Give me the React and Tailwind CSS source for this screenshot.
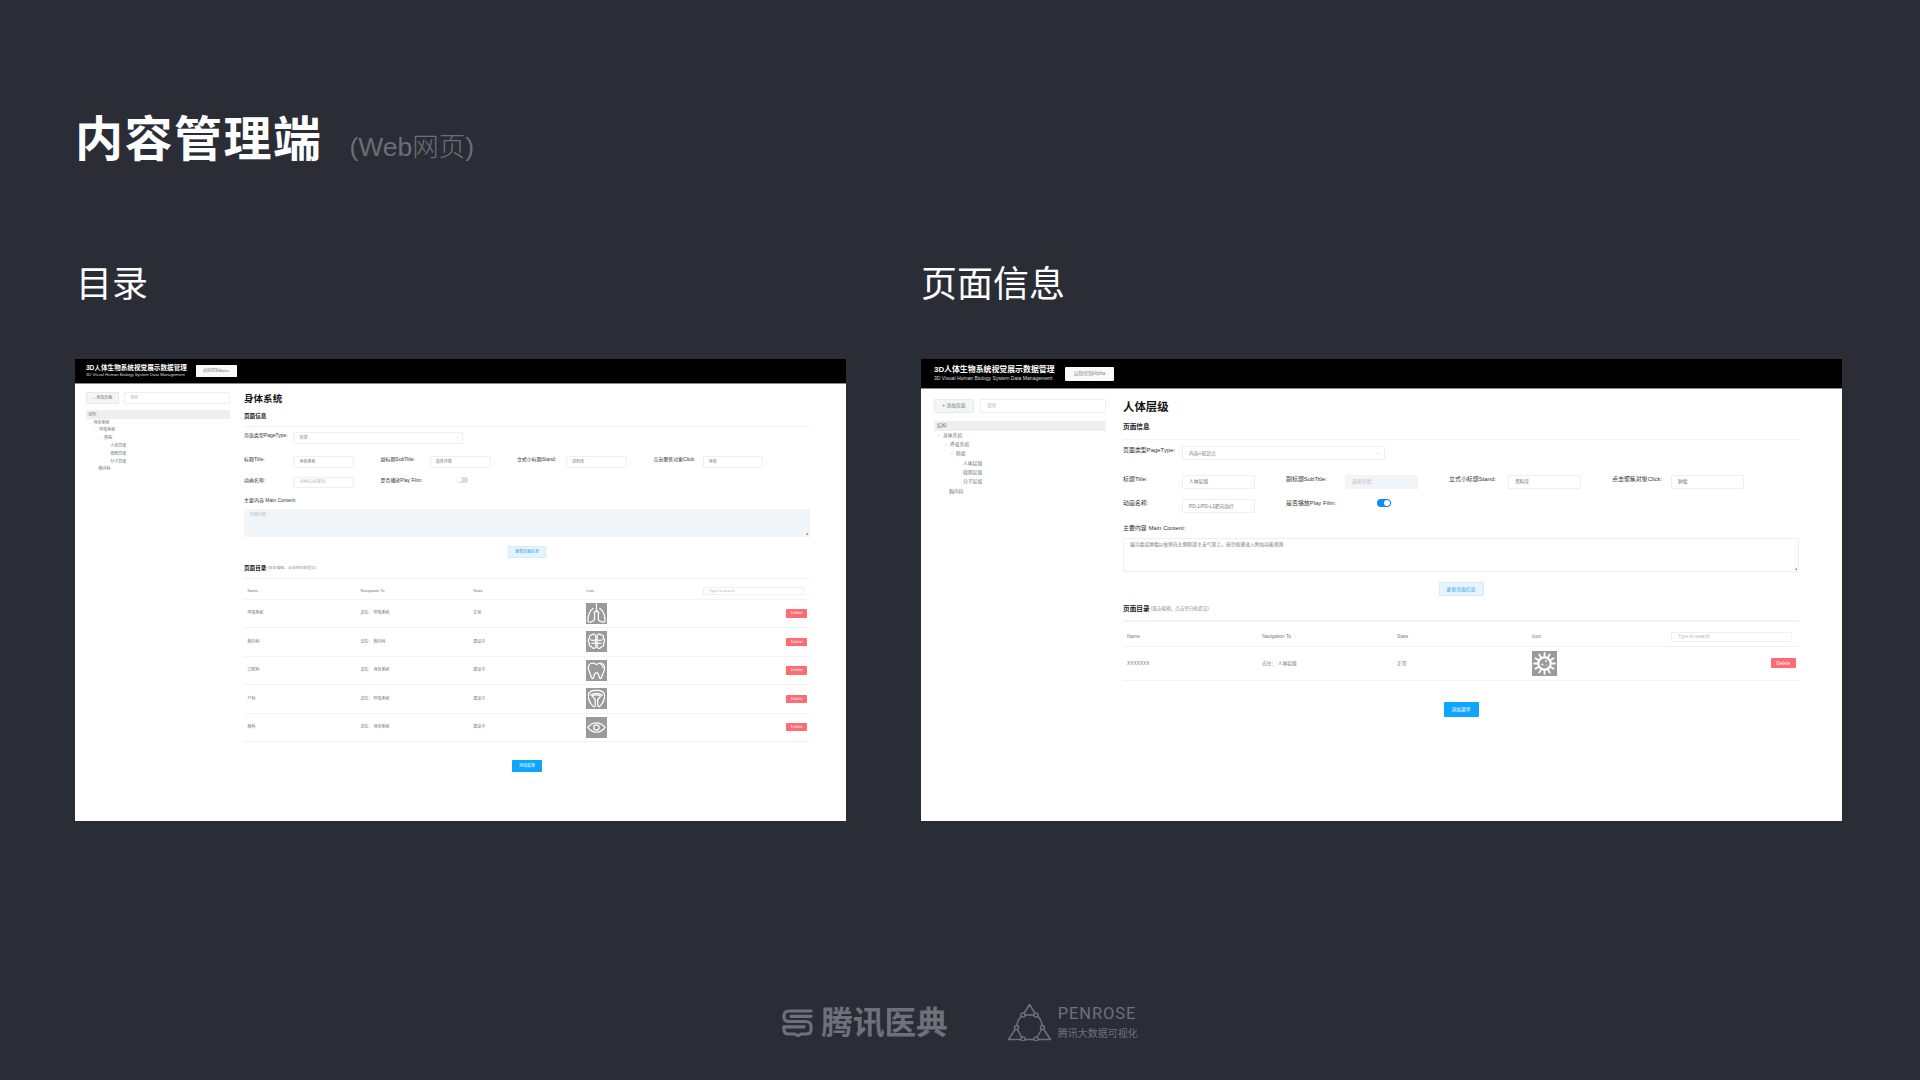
import { ChevronDown } from "lucide-react";

const font = "font-['Liberation_Sans','Noto_Sans_CJK_SC',sans-serif]";

const spikes = [0, 30, 60, 90, 120, 150, 180, 210, 240, 270, 300, 330];

function IconBox({ children }) {
  return (
    <svg viewBox="0 0 25 25" className="h-[25px] w-[25px] bg-[#9a9a9a]" fill="none" stroke="#fff" strokeWidth="1.500" strokeLinecap="round" strokeLinejoin="round">
      {children}
    </svg>
  );
}

function LungsIcon() {
  return (
    <IconBox>
      <path d="M12.500 1v3M12.500 5.500v5M12.500 8.500 9.500 11.500M12.500 8.500l3 3" />
      <path d="M8.500 6.500C5 8.500 2.600 14 2.200 20.500c-.1 2 1 2.600 2.600 2.300 3-.5 5.400-1 5.400-3.600V11.500" />
      <path d="M16.500 6.500c3.500 2 5.900 7.500 6.300 14 .1 2-1 2.600-2.600 2.300-3-.5-5.400-1-5.400-3.600V11.500" />
    </IconBox>
  );
}

function BrainIcon() {
  return (
    <IconBox>
      <path d="M11.700 5.500C11 3.500 8.500 3 7 4.500 4.800 4.500 3.700 6.300 4.300 8.300 2.300 9.800 2.300 13 4 14.500 3.300 17 5 19 7 19c.8 2 3.700 2.300 4.700.2Z" />
      <path d="M13.300 5.500C14 3.500 16.500 3 18 4.500c2.200 0 3.300 1.800 2.700 3.800 2 1.500 2 4.700.3 6.200.7 2.500-1 4.500-3 4.500-.8 2-3.700 2.300-4.700.2Z" />
      <path d="M5.500 10.500c2 1.200 4 1 6.200 0M7 15c1.500-.8 3-.8 4.700 0M19.500 10.500c-2 1.200-4 1-6.200 0M18 15c-1.500-.8-3-.8-4.700 0" />
    </IconBox>
  );
}

function ToothIcon() {
  return (
    <IconBox>
      <path d="M12.500 5.500C9 2.500 2.800 2.800 2.800 9.500c0 4 2.200 6 3.200 10 .6 2.800 2.300 3.400 3 1.500.8-2.400 1-6 3.500-6s2.700 3.600 3.500 6c.7 1.900 2.400 1.300 3-1.500 1-4 3.200-6 3.200-10 0-6.700-6.200-7-9.700-4Z" />
      <path d="M17.500 4.800c1.700.6 2.800 2.200 2.800 4.400" />
    </IconBox>
  );
}

function UterusIcon() {
  return (
    <IconBox>
      <path d="M12.500 2.800C6.500 2.800 2.800 4.800 2.800 9c0 5 3.200 10.500 5.800 12.800 1.200 1 2.400.2 2.400-1.300v-6.800L7.200 9.500c3.500-1.800 7-1.800 10.600 0L14 13.700v6.800c0 1.500 1.200 2.300 2.400 1.300 2.600-2.300 5.800-7.800 5.800-12.800 0-4.200-3.700-6.200-9.700-6.200Z" />
      <path d="M5.500 8.500c4.500-2.800 9.500-2.800 14 0" />
    </IconBox>
  );
}

function EyeIcon() {
  return (
    <IconBox>
      <path d="M2.200 12.500C7.500 5 17.500 5 22.800 12.500 17.500 20 7.500 20 2.200 12.500Z" />
      <circle cx="12.500" cy="12.500" r="3.200" />
    </IconBox>
  );
}

function VirusIcon() {
  return (
    <IconBox>
      <circle cx="12.500" cy="12.500" r="6.200" strokeWidth="2.200" />
      {spikes.map((a) => (
        <line
          key={a}
          x1={12.5 + 6.5 * Math.cos((a * Math.PI) / 180)}
          y1={12.5 + 6.5 * Math.sin((a * Math.PI) / 180)}
          x2={12.5 + 10.5 * Math.cos((a * Math.PI) / 180)}
          y2={12.5 + 10.5 * Math.sin((a * Math.PI) / 180)}
          strokeWidth="1.800"
        />
      ))}
      <circle cx="10.500" cy="13.500" r="1" fill="#fff" stroke="none" />
      <circle cx="14" cy="10" r="0.900" fill="#fff" stroke="none" />
      <circle cx="14.500" cy="14.500" r="0.600" fill="#fff" stroke="none" />
    </IconBox>
  );
}

function TencentLogo() {
  return (
    <svg viewBox="0 0 31 29" className="h-[29px] w-[31px]" fill="none" stroke="#6d717b" strokeWidth="3.200" strokeLinecap="round" strokeLinejoin="round">
      <path d="M29 3H7.500C4 3 2 5 2 7.500v1.200C2 11.500 4 13.500 7.500 13.500h16c3.500 0 5.500 2 5.500 4.500V22c0 2.500-2 4-5 4h-5l-3 1.800-3-1.800H7c-3 0-5-1.500-5-4v-3" />
      <path d="M9 8.300h20M2 18.800h20" />
    </svg>
  );
}

function PenroseLogo() {
  const nodes = [[15.5, 12], [28.5, 12], [9, 24.5], [35, 24.5], [15.5, 36], [28.5, 36]];
  return (
    <svg viewBox="0 0 44 38" className="h-[38px] w-[45px]" fill="none" stroke="#6d717b" strokeWidth="1.500" strokeLinejoin="round">
      <path d="M22 1.500 15.500 12h13ZM9 24.500 1 36.500h14.500ZM35 24.500 43 36.500H28.500Z" />
      <path d="M15.500 12C11.500 14.500 9.500 19 9 24.500M28.500 12c4 2.500 6 7 6.500 12.500M15.500 36.500h13" />
      {nodes.map(([x, y]) => (
        <circle key={`${x}-${y}`} cx={x} cy={y} r="2" fill="#2a2d36" />
      ))}
    </svg>
  );
}

function Field({ label, value, muted, disabled }) {
  return (
    <div className="flex items-start">
      <div className="w-[59px] text-[5.950px] leading-[8px] text-[#333]">{label}</div>
      <div className={`flex h-[14px] w-[72.500px] items-center rounded-[1px] border px-[6px] text-[4.800px] ${disabled ? "border-[#f2f5f8] bg-[#f2f5f8]" : "border-[#f0f0f0] bg-white"} ${muted ? "text-[#bbb]" : "text-[#777]"}`}>
        {value}
      </div>
    </div>
  );
}

function Toggle({ on }) {
  return (
    <div className="flex items-start">
      <div className="w-[91px] text-[5.950px] leading-[8px] text-[#333]">是否播放Play Film:</div>
      <div className={`flex h-[8px] w-[14px] items-center rounded-full px-[1px] ${on ? "justify-end bg-[#0a8cf5]" : "justify-start bg-[#dcdcdc]"}`}>
        <div className="h-[6px] w-[6px] rounded-full bg-white" />
      </div>
    </div>
  );
}

function Panel({ frame, inner, data }) {
  return (
    <div className={`overflow-hidden bg-white ${frame}`}>
      <div className={`w-[921px] ${inner}`}>
        <div className="flex h-[30px] items-center border-b border-[#8a8a8a] bg-black pl-[13px]">
          <div className="w-[131px]">
            <div className="text-[7.900px] leading-[10px] font-bold text-white">3D人体生物系统视觉展示数据管理</div>
            <div className="text-[5.050px] leading-[7px] text-[#ddd]">3D Visual Human Biology System Data Management</div>
          </div>
          <div className="flex h-[14px] w-[49px] items-center justify-center rounded-[1px] bg-[#fafafa] text-[4.800px] text-[#888]">远程控制Alpha</div>
        </div>

        <div className="flex pt-[10px]">
          <div className="ml-[13px] w-[172px] text-[4.800px] text-[#777]">
            <div className="flex gap-[6px]">
              <div className="flex h-[14px] w-[40px] items-center justify-center rounded-[1px] border border-[#eaeaea] bg-[#f4f5f7]">+ 添加页面</div>
              <div className="flex h-[14px] flex-1 items-center rounded-[1px] border border-[#f0f0f0] px-[6px] text-[#bbb]">搜索</div>
            </div>
            <div className="mt-[7.500px] flex h-[10px] items-center bg-[#efefef] pl-[3px]">结构</div>
            <div className="flex h-[9.330px] items-center pl-[4px]"><span className="w-[5px]">-</span>身体系统</div>
            <div className="flex h-[9.330px] items-center pl-[11px]"><span className="w-[5px]">-</span>呼吸系统</div>
            <div className="flex h-[9.330px] items-center pl-[17px]"><span className="w-[5px]">-</span>肺癌</div>
            <div className="flex h-[9.330px] items-center pl-[29px]">人体层级</div>
            <div className="flex h-[9.330px] items-center pl-[29px]">微观层级</div>
            <div className="flex h-[9.330px] items-center pl-[29px]">分子层级</div>
            <div className="flex h-[9.330px] items-center pl-[15px]">胸内科</div>
          </div>

          <div className="ml-[17px] w-[676px]">
            <div className="text-[11.400px] leading-[16px] font-bold text-[#111]">{data.title}</div>
            <div className="mt-[7.300px] text-[6.670px] leading-[10px] font-bold text-[#222]">页面信息</div>
            <div className="mt-[6.500px] h-[1.500px] bg-[#f3f3f3]" />

            <div className="mt-[6.200px] flex items-start">
              <div className="w-[59px] text-[5.950px] leading-[8px] text-[#333]">页面类型PageType:</div>
              <div className="flex h-[14px] w-[203px] items-center justify-between rounded-[1px] border border-[#f0f0f0] pr-[4px] pl-[6px] text-[4.800px] text-[#777]">
                {data.pageType}
                <ChevronDown className="h-[5px] w-[5px] text-[#bbb]" strokeWidth={1.500} />
              </div>
            </div>

            <div className="mt-[14.600px] grid grid-cols-[repeat(4,163px)]">
              <Field label="标题Title:" value={data.name} />
              <Field label="副标题SubTitle:" value="选择详情" muted={data.subDisabled} disabled={data.subDisabled} />
              <Field label="立式小标题Stand:" value="资料库" />
              <Field label="点击聚焦对象Click:" value={data.click} />
            </div>

            <div className="mt-[10.400px] grid grid-cols-[repeat(4,163px)]">
              <Field label="动画名称:" value={data.film} muted={data.filmMuted} />
              <Toggle on={data.playing} />
            </div>

            <div className="mt-[10.600px] text-[5.950px] leading-[8px] text-[#333]">主要内容 Main Content:</div>
            <div className={`relative mt-[6px] h-[34px] rounded-[1px] border px-[6px] py-[3px] text-[4.800px] leading-[6px] ${data.contentClass}`}>
              {data.content}
              <div className="absolute right-[1px] bottom-[1px] h-[3px] w-[3px] bg-[linear-gradient(135deg,transparent_50%,#999_50%)]" />
            </div>

            <div className="mt-[10px] flex justify-center">
              <div className="flex h-[14.400px] w-[45px] items-center justify-center rounded-[1px] border border-[#d3eafb] bg-[#e8f4fd] text-[4.800px] text-[#1aa1f5]">更新页面信息</div>
            </div>

            <div className="mt-[7.700px] flex items-center leading-[10px]">
              <span className="text-[6.670px] font-bold text-[#222]">页面目录</span>
              <span className="ml-[1px] text-[4.600px] text-[#888]">(双击编辑，点击空白处提交)</span>
            </div>
            <div className="mt-[6.300px] h-[1.500px] bg-[#f3f3f3]" />

            <div className="grid h-[24.800px] grid-cols-[135px_135px_135px_135px_1fr] items-center border-b border-[#f3f3f3] pt-[6px] pl-[4px] text-[4.800px] text-[#777]">
              <div>Name</div>
              <div>Navigation To</div>
              <div>State</div>
              <div>Icon</div>
              <div className="flex justify-end pr-[7px]">
                <div className="flex h-[9.500px] w-[121px] items-center rounded-[1px] border border-[#f0f0f0] px-[6px] text-[#bbb]">Type to search</div>
              </div>
            </div>

            {data.rows.map((row) => (
              <div key={row.name} className="grid h-[34px] grid-cols-[135px_135px_135px_135px_1fr] items-center border-b border-[#f3f3f3] pl-[4px] text-[4.800px] text-[#777]">
                <div>{row.name}</div>
                <div>{row.nav}</div>
                <div>{row.state}</div>
                <div>{row.icon}</div>
                <div className="flex justify-end pr-[3.400px]">
                  <div className="flex h-[10px] w-[24.600px] items-center justify-center rounded-[1px] bg-[#ff6b72] text-white">Delete</div>
                </div>
              </div>
            ))}

            <div className="mt-[21.500px] flex justify-center">
              <div className="flex h-[14.700px] w-[35px] items-center justify-center rounded-[1px] bg-[#0ea5ff] text-[4.800px] text-white">添加菜单</div>
            </div>
          </div>
        </div>
      </div>
    </div>
  );
}

const catalog = {
  title: "身体系统",
  pageType: "目录",
  name: "身体系统",
  click: "身体",
  film: "动画名(前播放)",
  filmMuted: true,
  subDisabled: false,
  playing: false,
  content: "页面内容",
  contentClass: "border-[#f2f5f8] bg-[#f2f5f8] text-[#bbb]",
  rows: [
    { name: "呼吸系统", nav: "去往： 呼吸系统", state: "正常", icon: <LungsIcon /> },
    { name: "胸内科", nav: "去往： 胸内科", state: "建设中", icon: <BrainIcon /> },
    { name: "口腔科", nav: "去往： 身体系统", state: "建设中", icon: <ToothIcon /> },
    { name: "产科", nav: "去往： 呼吸系统", state: "建设中", icon: <UterusIcon /> },
    { name: "眼科", nav: "去往： 身体系统", state: "建设中", icon: <EyeIcon /> },
  ],
};

const pageInfo = {
  title: "人体层级",
  pageType: "内容+知识点",
  name: "人体层级",
  click: "肿瘤",
  film: "PD-1/PD-L1靶向治疗",
  filmMuted: false,
  subDisabled: true,
  playing: true,
  content: "展示癌症肿瘤以依附在左侧肺部主支气管上。按空格键进入附加功能视角",
  contentClass: "border-[#f0f0f0] bg-white text-[#777]",
  rows: [{ name: "XXXXXXX", nav: "去往： 人体层级", state: "正常", icon: <VirusIcon /> }],
};

export default function App() {
  return (
    <div className={`h-[1080px] w-[1920px] overflow-hidden bg-[#2a2d36] pt-[110px] ${font}`}>
      <div className="flex items-baseline pl-[75px]">
        <h1 className="text-[48px] leading-[60px] font-bold tracking-[1.500px] text-white">内容管理端</h1>
        <span className="ml-[27px] text-[26.500px] font-light text-[#6b6e76]">(Web网页)</span>
      </div>

      <div className="mt-[93px] flex text-[36px] leading-[44px] text-white">
        <div className="w-[921px] pl-[76px]">目录</div>
        <div>页面信息</div>
      </div>

      <div className="mt-[52px] flex gap-[75px] pl-[75px]">
        <Panel frame="h-[462px] w-[771px]" inner="h-[552px] [zoom:0.837]" data={catalog} />
        <Panel frame="h-[462px] w-[921px]" inner="h-[462px]" data={pageInfo} />
      </div>

      <div className="mt-[181px] flex items-center justify-center text-[#6d717b]">
        <TencentLogo />
        <div className="mt-[2px] ml-[8px] text-[31.600px] leading-[38px] font-bold">腾讯医典</div>
        <div className="ml-[59px]"><PenroseLogo /></div>
        <div className="ml-[6px]">
          <div className="font-['Roboto',sans-serif] text-[16.500px] leading-[20px] tracking-[0.900px]">PENROSE</div>
          <div className="mt-[3px] text-[10px] leading-[14px]">腾讯大数据可视化</div>
        </div>
      </div>
    </div>
  );
}
